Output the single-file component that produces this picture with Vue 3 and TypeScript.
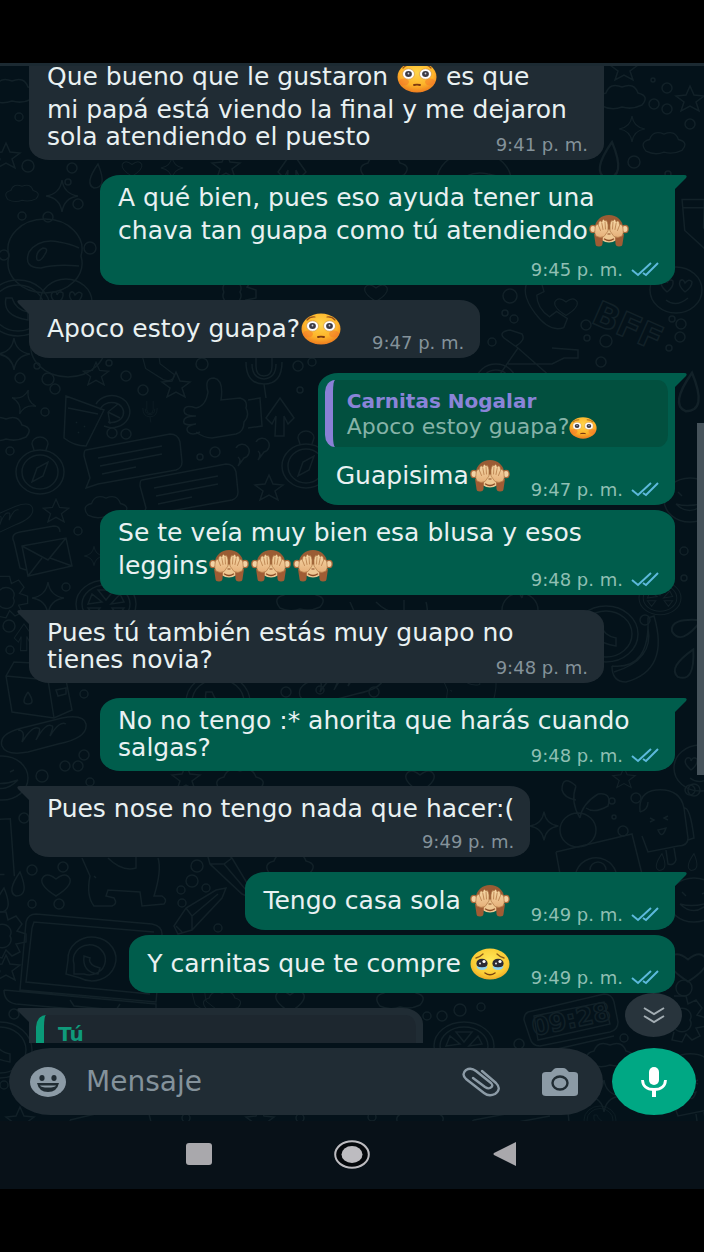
<script setup lang="ts">
type EmojiName = 'flushed' | 'monkey' | 'tears'
type Segment = string | { emoji: EmojiName }
type Mode = 'inline' | 'overlay' | 'stacked'

interface Message {
  id: number
  mine: boolean
  tail: boolean
  mode: Mode
  time: string
  lines: Segment[][]
  quote?: { author: string; body: Segment[] }
}

const flushed: Segment = { emoji: 'flushed' }
const monkey: Segment = { emoji: 'monkey' }
const tears: Segment = { emoji: 'tears' }

const emojiLabels: Record<EmojiName, string> = {
  flushed: 'cara sonrojada',
  monkey: 'mono que se tapa los ojos',
  tears: 'cara aguantando las lágrimas',
}

const messages: Message[] = [
  {
    id: 1, mine: false, tail: false, mode: 'overlay', time: '9:41 p. m.',
    lines: [
      ['Que bueno que le gustaron ', flushed, ' es que'],
      ['mi papá está viendo la final y me dejaron'],
      ['sola atendiendo el puesto'],
    ],
  },
  {
    id: 2, mine: true, tail: true, mode: 'stacked', time: '9:45 p. m.',
    lines: [
      ['A qué bien, pues eso ayuda tener una'],
      ['chava tan guapa como tú atendiendo', monkey],
    ],
  },
  { id: 3, mine: false, tail: true, mode: 'inline', time: '9:47 p. m.', lines: [['Apoco estoy guapa?', flushed]] },
  {
    id: 4, mine: true, tail: true, mode: 'inline', time: '9:47 p. m.',
    lines: [['Guapisima', monkey]],
    quote: { author: 'Carnitas Nogalar', body: ['Apoco estoy guapa?', flushed] },
  },
  {
    id: 5, mine: true, tail: false, mode: 'overlay', time: '9:48 p. m.',
    lines: [['Se te veía muy bien esa blusa y esos'], ['leggins', monkey, monkey, monkey]],
  },
  {
    id: 6, mine: false, tail: true, mode: 'overlay', time: '9:48 p. m.',
    lines: [['Pues tú también estás muy guapo no'], ['tienes novia?']],
  },
  {
    id: 7, mine: true, tail: true, mode: 'overlay', time: '9:48 p. m.',
    lines: [['No no tengo :* ahorita que harás cuando'], ['salgas?']],
  },
  { id: 8, mine: false, tail: true, mode: 'stacked', time: '9:49 p. m.', lines: [['Pues nose no tengo nada que hacer:(']] },
  { id: 9, mine: true, tail: true, mode: 'inline', time: '9:49 p. m.', lines: [['Tengo casa sola ', monkey]] },
  { id: 10, mine: true, tail: false, mode: 'inline', time: '9:49 p. m.', lines: [['Y carnitas que te compre ', tears]] },
]

const isTall = (line: Segment[]): boolean => line.some((s) => typeof s !== 'string')
const startsGroup = (i: number): boolean => i > 0 && messages[i].mine !== messages[i - 1].mine

/* Wallpaper doodles, each drawn around its own origin. */
const shapes = {
  star: 'M0-13 4-4 14-3 6 3 9 12 0 7-9 12-6 3-14-3-4-4Z',
  spark: 'M0-16Q2-2 16 0 2 2 0 16-2 2-16 0-2-2 0-16Z',
  cloud: 'M-20 8Q-28-2-16-5-12-16 0-11 12-16 16-5 28-2 20 7 10 12 0 9-10 13-20 8Z',
  heart: 'M0 12Q-16 2-14-5-10-13 0-5 10-13 14-5 16 2 0 12Z',
  planet: 'M-36 0A37 30 0 1 1 36 0 37 30 0 1 1-36 0M34 10Q10 8-4 12-22 12-16-4-6-18 14-14 26-12 34-8M-8 4Q-10-4-2-8 4-8 0-2-4 6-8 4',
  thumb: 'M-16 0Q-6-2-4-16-8-30 2-30 12-28 9-8L28-10Q36-8 34 0 38 8 32 14 32 24 24 26L0 30Q-8 30-16 24M-16 0Q-28-4-28 3-28 8-16 8-30 8-28 15-26 18-16 16-28 18-24 24-20 28-12 24M36-8 48-10 50 18 36 20',
  chat: 'M-46-10 38-26Q46-26 48-18L50 2Q50 8 44 10L-34 24-46 28-42 18-48-4Q-48-10-46-10M-34-2 30-14M-32 6 30-6M-30 14 4 7',
  compass: 'M-24 0A24 22 0 1 1 24 0 24 22 0 1 1-24 0M-18 0A18 17 0 1 1 18 0 18 17 0 1 1-18 0M8-10 3 4-8 10-3-4ZM-6-22-8-28A8 7 0 1 1 8-28L6-22',
  drink: 'M-22-22 16-8-2 28Q-14 28-24 20ZM-20-10 10-4M8-14A18 16 0 1 1 16 8M12-8A12 10 0 1 1 20 4M20-6 30-14M20-6 32 0M20-6 22 6M-12 4-11 5M-4 8-3 9M-10 14-9 15',
  mic: 'M-8-28V-6Q-8 4 0 4 8 4 8-6V-28M-18-10Q-18 12 0 12 18 12 18-10M-12-8Q-12 6 0 7 12 6 12-8M0 12 2 26',
  arrow: 'M-14 0 0-20 14 0 8 6 4-2 4 18-5 18-4-2-8 6Z',
  envelope: 'M-30-16Q-34-24-24-26L10-32Q16-32 16-26M-22-12 22-20 28 8-16 18ZM-22-12 4 2 22-20M-16 18-2 0M28 8 6 0M-30-16-24 10-18 12',
  milk: 'M-30-14-22-28 18-26 30-10 36 20 18 28-24 22ZM-30-14 12-10 18 28M12-10 18-26M-8 2Q-16 14-8 14 0 14-8 2M20 0 30-2 30 4 22 6Z',
  bread: 'M-40 6Q-44-6-20-12L20-22Q42-26 44-16 46-2 16 4L-14 12Q-36 16-40 6M-24-10Q-16-10-20 2-10-14-4-12 0-12-6 0 4-18 10-14 12-14 8-4 18-20 24-16',
  laptop: 'M-66-46Q-64-54-56-54L60-44Q70-42 70-34L64 34-72 22ZM-60-40-58-46 62-36M-60-40-66 14 58 26M-88 22 64 36V48L-76 36Q-88 34-88 22M-22 32-18 38 24 42 28 36M-26 6-24-8A24 22 0 1 1-12 10ZM-18-4A16 15 0 1 1-8 6L-18 6ZM-8-12Q-10 4 6 6L8 0 2-2Q-4-6-2-10Z',
  cat: 'M-40-18-32 0Q-36 20-28 30L-10 30Q-4 28-8 22L-16 20-14 14 18 16 20 30 42 28Q46 24 40 20L32 20Q40-6 36-18M-14-18Q0-4 14-8L14-20M-28 0-26 2',
  pencil: 'M-26 14-14-4 16-22 26-24 22-14-8 18-22 22ZM-14-4-8 4-8 18M-8 4 18-18M-24 14-18 20',
  popsicle: 'M-20-14Q-22-34-4-36 20-38 24-18L28 12Q28 20 18 20L-12 26-18 10M24-18Q30-20 34 12L28 14M6 24 8 38Q14 40 16 34L14 22M-10-8-6-6-10-4M8-10 4-8 8-6M-2 4Q2 14 6 2ZM-20-14Q-12-16-12-24',
  cherry: 'M-20 18A18 17 0 1 1 16 18 18 17 0 1 1-20 18M0 6Q-10-10-4-26M0 6Q2-8 18-18M-4-26Q-18-38-18-22-16-14-4-12M18-18Q32-20 28-6 14 2 6-4',
  phone: 'M-16-30Q-28-16-10 8 6 30 22 24L26 14 14 6 6 12Q-8 2-8-12L0-16-4-30Z',
  orange: 'M-30 0A30 24 0 1 1 30 0 30 24 0 1 1-30 0M-24 0A24 19 0 1 1 24 0 24 19 0 1 1-24 0M-18 0-4-2-14-10ZM-8-14 0-4 8-14ZM18-2 5 0 14-10ZM18 4 6 4 12 12ZM-18 4-6 4-12 12Z',
  watch: 'M-44-10 32-28Q40-28 42-20L46 0Q46 8 38 10L-32 24Q-40 24-42 16L-48-2Q-48-8-44-10M-38-6 32-20 38 2-34 18ZM-28 30 42 14',
  bike: 'M-42 16A20 18 0 1 1-2 16M-36 16A14 12 0 1 1-8 16M-22 14 0-18 34 12M0-18-14-28Q-20-34-8-36L4-32Q8-26-2-20M-10-2 34-2 46-8 60-8 60-16 34-18',
  smile: 'M-26 0A26 22 0 1 1 26 0 26 22 0 1 1-26 0M-12-8-8-4M8-6 12-8M-14 4Q0 18 16 2Q0 8-14 4',
  hearteyes: 'M-26 0A26 23 0 1 1 26 0 26 23 0 1 1-26 0M-9 2Q-18-6-13-10-9-11-9-7-7-12-3-9-2-3-9 2M9 2Q2-4 4-9 7-12 9-7 13-12 16-8 16-3 9 2M-10 10Q0 18 12 8',
  banana: 'M-28 18Q10 22 8-30L14-32Q30 22-14 34-28 34-28 18M8-20Q14 12-26 24',
  wheel: 'M-32 0A32 28 0 1 1 32 0 32 28 0 1 1-32 0M-26 0A26 23 0 1 1 26 0 26 23 0 1 1-26 0M-12-10Q-16 8 10 12L10 4Q-2 2-6-10Z',
  photo: 'M-40-10 36-28 50 28M-40-10-32 34M-20 24A20 20 0 0 1 20 10M-6 8A8 8 0 1 1 10 8M-26 40 40 28',
  quote: 'M-14-6A7 7 0 1 1-6 4L-12 12Q-8 6-12 3M6-12A7 7 0 1 1 14-2L8 6Q12 0 8-3',
  drop: 'M0-12Q-14 8-4 12 10 12 0-12Z',
  gear: 'M-8-24 4-24 6-16 14-20 20-12 15-5 24-2 24 6 14 8 18 16 10 20 4 14 0 22-10 20-8 12M-8 0A9 8 0 1 1 8 0 9 8 0 1 1-8 0',
  sock: 'M-16-22 6-26 10 2 28 16Q26 26 14 22L-8 8ZM-14-14 8-18',
} as const

interface Doodle { s: keyof typeof shapes; x: number; y: number; k?: number; r?: number }

const doodles: Doodle[] = [
  { s: 'cloud', x: 12, y: 92 }, { s: 'star', x: 6, y: 156 }, { s: 'cloud', x: 22, y: 194, k: 0.7 }, { s: 'spark', x: 62, y: 196 },
  { s: 'planet', x: 45, y: 256 }, { s: 'wheel', x: 18, y: 308 }, { s: 'hearteyes', x: 66, y: 302 }, { s: 'drop', x: 98, y: 176 },
  { s: 'heart', x: 132, y: 168, k: 0.7 }, { s: 'spark', x: 172, y: 168, k: 0.7 }, { s: 'star', x: 226, y: 166 }, { s: 'arrow', x: 292, y: 172 },
  { s: 'cloud', x: 384, y: 168 }, { s: 'planet', x: 474, y: 188 }, { s: 'star', x: 272, y: 76 },
  { s: 'star', x: 624, y: 68 }, { s: 'star', x: 690, y: 99 }, { s: 'cloud', x: 622, y: 98 }, { s: 'spark', x: 632, y: 129, k: 0.8 },
  { s: 'cloud', x: 664, y: 144, k: 0.9 }, { s: 'drop', x: 612, y: 160, k: 1.5 }, { s: 'sock', x: 694, y: 224, r: 10 },
  { s: 'hearteyes', x: 676, y: 290 }, { s: 'heart', x: 566, y: 306, k: 0.8 },
  { s: 'phone', x: 544, y: 306, k: 0.9 }, { s: 'bike', x: 518, y: 366 }, { s: 'heart', x: 376, y: 292, k: 0.8 }, { s: 'gear', x: 232, y: 292 },
  { s: 'planet', x: 68, y: 340 }, { s: 'spark', x: 14, y: 354 }, { s: 'star', x: 96, y: 374, k: 0.9 }, { s: 'star', x: 176, y: 385 },
  { s: 'sock', x: 152, y: 362, k: 0.8 }, { s: 'mic', x: 264, y: 372 }, { s: 'thumb', x: 212, y: 408 }, { s: 'drink', x: 88, y: 418 },
  { s: 'spark', x: 24, y: 402, r: 20, k: 0.8 }, { s: 'cloud', x: 6, y: 430 }, { s: 'mic', x: 150, y: 412, k: 0.4 }, { s: 'arrow', x: 280, y: 418 },
  { s: 'compass', x: 40, y: 472 }, { s: 'chat', x: 132, y: 460 }, { s: 'chat', x: 188, y: 490 }, { s: 'quote', x: 250, y: 454 },
  { s: 'compass', x: 306, y: 466 }, { s: 'star', x: 269, y: 488 }, { s: 'cloud', x: 106, y: 508, k: 0.9 }, { s: 'star', x: 56, y: 511, k: 0.9 },
  { s: 'bread', x: 4, y: 524, k: 0.7, r: -10 }, { s: 'envelope', x: 44, y: 558 }, { s: 'spark', x: 94, y: 556, k: 0.6 }, { s: 'gear', x: 6, y: 598, k: 0.9 },
  { s: 'spark', x: 48, y: 598 }, { s: 'orange', x: 106, y: 604 }, { s: 'cat', x: 390, y: 620 }, { s: 'cloud', x: 300, y: 600 },
  { s: 'arrow', x: 24, y: 638, k: 0.7 }, { s: 'milk', x: 36, y: 690 }, { s: 'bread', x: 42, y: 740 }, { s: 'smile', x: 2, y: 778 },
  { s: 'cherry', x: 522, y: 592 }, { s: 'orange', x: 660, y: 598, k: 0.7 }, { s: 'wheel', x: 606, y: 634 }, { s: 'banana', x: 640, y: 648 },
  { s: 'drop', x: 688, y: 628, r: 60, k: 1.3 }, { s: 'drop', x: 688, y: 664, r: 20, k: 1.3 }, { s: 'wheel', x: 218, y: 702 }, { s: 'bread', x: 340, y: 690 },
  { s: 'hearteyes', x: 700, y: 768 }, { s: 'cat', x: 470, y: 690, k: 0.7 }, { s: 'smile', x: 690, y: 500 }, { s: 'drop', x: 692, y: 392, k: 1.6 },
  { s: 'star', x: 186, y: 778 }, { s: 'cloud', x: 240, y: 782 }, { s: 'heart', x: 420, y: 780 }, { s: 'cherry', x: 580, y: 812 },
  { s: 'popsicle', x: 660, y: 826 }, { s: 'photo', x: 596, y: 862 }, { s: 'spark', x: 544, y: 826, k: 0.9 }, { s: 'star', x: 624, y: 778, k: 0.8 },
  { s: 'photo', x: -30, y: 840, r: 10 }, { s: 'drop', x: 20, y: 884 }, { s: 'drop', x: 4, y: 900 }, { s: 'heart', x: 56, y: 884 },
  { s: 'cat', x: 122, y: 876 }, { s: 'pencil', x: 200, y: 912 }, { s: 'pencil', x: 228, y: 872, r: 90 }, { s: 'cloud', x: 290, y: 866 },
  { s: 'laptop', x: 92, y: 968 }, { s: 'star', x: 6, y: 968 }, { s: 'gear', x: 2, y: 936 }, { s: 'drop', x: 662, y: 862, k: 0.7 },
  { s: 'drop', x: 694, y: 862, k: 0.7 }, { s: 'smile', x: 694, y: 900 }, { s: 'heart', x: 688, y: 966, k: 1.3 }, { s: 'cloud', x: 400, y: 998 },
  { s: 'sock', x: 200, y: 1000, k: 0.6 }, { s: 'heart', x: 290, y: 1000 }, { s: 'cloud', x: 222, y: 1002, k: 0.8 }, { s: 'orange', x: 464, y: 1046 },
  { s: 'watch', x: 572, y: 1022 }, { s: 'gear', x: 682, y: 1020 }, { s: 'wheel', x: 0, y: 1050 }, { s: 'cloud', x: 610, y: 1056 },
  { s: 'spark', x: 604, y: 1096 }, { s: 'wheel', x: 600, y: 1120, k: 0.5 }, { s: 'photo', x: 110, y: 1130 }, { s: 'popsicle', x: 690, y: 1090 },
  { s: 'star', x: 260, y: 1120 }, { s: 'cloud', x: 420, y: 1118 }, { s: 'star', x: 20, y: 1120 }, { s: 'chat', x: 520, y: 1130 },
]

const dots: number[][] = [
  [19, 117, 4], [28, 166, 6], [72, 168, 5], [68, 182, 3], [78, 204, 5], [48, 217, 5], [22, 216, 4], [4, 255, 5], [90, 248, 6],
  [667, 88, 5], [654, 104, 5], [667, 109, 5], [690, 124, 5], [634, 162, 6], [653, 80, 2], [668, 174, 3],
  [20, 378, 5], [48, 379, 6], [37, 366, 3], [55, 389, 5], [126, 376, 5], [109, 363, 3], [143, 390, 5], [45, 412, 4], [112, 433, 5], [126, 434, 5],
  [10, 451, 4], [200, 457, 3], [215, 452, 5], [202, 364, 6], [298, 366, 5], [312, 362, 4], [300, 390, 3],
  [586, 325, 5], [606, 341, 6], [587, 338, 3], [681, 324, 5], [672, 319, 3], [601, 362, 5], [680, 337, 5], [669, 348, 3], [505, 313, 3], [514, 319, 4], [492, 342, 4], [510, 296, 7],
  [78, 531, 4], [66, 587, 4], [9, 626, 6], [10, 650, 4], [84, 694, 4], [84, 755, 5], [65, 766, 5], [78, 766, 5], [42, 776, 6], [90, 782, 4],
  [684, 551, 4], [684, 578, 3], [645, 620, 5], [286, 692, 5], [320, 690, 4], [374, 692, 5], [690, 790, 5], [612, 801, 3], [614, 817, 2], [636, 798, 5], [623, 831, 5], [694, 790, 6],
  [24, 818, 5], [32, 870, 5], [63, 867, 5], [32, 904, 4], [59, 904, 5], [197, 866, 6], [192, 881, 6], [181, 890, 4], [206, 888, 4], [182, 903, 4], [218, 928, 4],
  [14, 1014, 5], [427, 1016, 4], [442, 1016, 5], [460, 1010, 6], [481, 1007, 4], [519, 1044, 5], [4, 1085, 4], [624, 1038, 4], [684, 988, 8],
  [186, 1118, 4], [300, 1118, 4], [372, 1117, 4], [640, 1100, 5],
]
</script>

<template>
  <div class="phone">
    <!-- Shared emoji artwork -->
    <svg class="defs" aria-hidden="true">
      <defs>
        <radialGradient id="g-face" cx="0.5" cy="0.35" r="0.7">
          <stop offset="0" stop-color="#ffd54a" />
          <stop offset="0.6" stop-color="#fdb42a" />
          <stop offset="1" stop-color="#ea701c" />
        </radialGradient>
        <radialGradient id="g-yellow" cx="0.5" cy="0.4" r="0.65">
          <stop offset="0" stop-color="#ffe95a" />
          <stop offset="0.7" stop-color="#fbcb34" />
          <stop offset="1" stop-color="#e99f22" />
        </radialGradient>
        <linearGradient id="g-hand" x1="0" y1="0" x2="0" y2="1">
          <stop offset="0" stop-color="#f6d8a6" />
          <stop offset="1" stop-color="#e6b07a" />
        </linearGradient>
      </defs>
      <symbol id="e-flushed" viewBox="0 0 40 32" preserveAspectRatio="none">
        <ellipse cx="20" cy="16" rx="19.500" ry="15.500" fill="url(#g-face)" />
        <ellipse cx="7" cy="21" rx="5" ry="3.500" fill="#f4742a" opacity=".5" />
        <ellipse cx="33" cy="21" rx="5" ry="3.500" fill="#f4742a" opacity=".5" />
        <path d="M6 7Q9 3.500 14 4M26 4Q31 3.500 34 7" fill="none" stroke="#9a5218" stroke-width="1.200" stroke-linecap="round" />
        <ellipse cx="11.500" cy="13" rx="6" ry="5.200" fill="#fff" stroke="#c98a3a" stroke-width=".6" />
        <ellipse cx="28.500" cy="13" rx="6" ry="5.200" fill="#fff" stroke="#c98a3a" stroke-width=".6" />
        <ellipse cx="11.500" cy="13" rx="3.400" ry="3" fill="#3b3a44" />
        <ellipse cx="28.500" cy="13" rx="3.400" ry="3" fill="#3b3a44" />
        <circle cx="11.500" cy="12.500" r=".9" fill="#c9cbd6" />
        <circle cx="28.500" cy="12.500" r=".9" fill="#c9cbd6" />
        <path d="M17 24Q20 23.300 23 24" fill="none" stroke="#7c3a10" stroke-width="1.800" stroke-linecap="round" />
      </symbol>
      <symbol id="e-monkey" viewBox="0 0 40 32" preserveAspectRatio="none">
        <ellipse cx="4" cy="14" rx="3.800" ry="4.200" fill="#a8683a" />
        <ellipse cx="36" cy="14" rx="3.800" ry="4.200" fill="#a8683a" />
        <ellipse cx="4" cy="14" rx="2.500" ry="3" fill="#f2d2a4" />
        <ellipse cx="36" cy="14" rx="2.500" ry="3" fill="#f2d2a4" />
        <ellipse cx="20" cy="12.500" rx="14" ry="12.500" fill="#9a5c34" />
        <ellipse cx="20" cy="21" rx="9.500" ry="6.500" fill="#eec792" />
        <path d="M15.500 24Q20 27 24.500 24" fill="none" stroke="#8a4a24" stroke-width="1.300" stroke-linecap="round" />
        <path d="M5 19H14L13.500 29Q13 31.500 10 31.500 6.500 31.500 6.500 29ZM35 19H26L26.500 29Q27 31.500 30 31.500 33.500 31.500 33.500 29Z" fill="#a05c34" />
        <path d="M19 10Q18 4 16 6 14 2.500 12.800 7 10 4 9.500 9.500 6 9 6 14 5 18 7 21 11 23.500 15 21.500L19 16Z" fill="url(#g-hand)" stroke="#b07846" stroke-width=".7" />
        <path d="M21 10Q22 4 24 6 26 2.500 27.200 7 30 4 30.500 9.500 34 9 34 14 35 18 33 21 29 23.500 25 21.500L21 16Z" fill="url(#g-hand)" stroke="#b07846" stroke-width=".7" />
        <path d="M16 7 16.500 14M12.800 8 14 14.500M9.500 10.500 11.500 15.500M24 7 23.500 14M27.200 8 26 14.500M30.500 10.500 28.500 15.500" stroke="#bb8350" stroke-width=".9" stroke-linecap="round" />
        <path d="M18.500 19H21.500" stroke="#8a4a24" stroke-width="1" />
      </symbol>
      <symbol id="e-tears" viewBox="0 0 40 32" preserveAspectRatio="none">
        <ellipse cx="20" cy="16" rx="19.500" ry="15.500" fill="url(#g-yellow)" />
        <path d="M6 10Q10 9 13 6M27 6Q30 9 34 10" fill="none" stroke="#8c5a16" stroke-width="1.300" stroke-linecap="round" />
        <ellipse cx="12" cy="15.500" rx="5.600" ry="4.800" fill="#2c2a35" />
        <ellipse cx="28" cy="15.500" rx="5.600" ry="4.800" fill="#2c2a35" />
        <circle cx="14" cy="13.500" r="1.600" fill="#fff" />
        <circle cx="30" cy="13.500" r="1.600" fill="#fff" />
        <circle cx="10" cy="15.500" r=".9" fill="#fff" />
        <circle cx="26" cy="15.500" r=".9" fill="#fff" />
        <path d="M6.500 18Q12 20.500 17.500 18 17 22 12 22 7 22 6.500 18ZM22.500 18Q28 20.500 33.500 18 33 22 28 22 23 22 22.500 18Z" fill="#8ed3ee" />
        <path d="M15 25Q20 28.500 25 25" fill="none" stroke="#7a4310" stroke-width="1.500" stroke-linecap="round" />
      </symbol>
    </svg>

    <main class="screen">
      <svg class="wallpaper" viewBox="0 63 704 1058" preserveAspectRatio="xMidYMid slice" aria-hidden="true">
        <path
          v-for="(d, i) in doodles" :key="i" :d="shapes[d.s]"
          :transform="`translate(${d.x} ${d.y}) rotate(${d.r ?? 0}) scale(${d.k ?? 1})`"
        />
        <circle v-for="([x, y, r], i) in dots" :key="'c' + i" :cx="x" :cy="y" :r="r" />
        <text x="590" y="322" font-size="34" transform="rotate(24 590 322)">BFF</text>
        <text x="534" y="1036" font-size="25" transform="rotate(-12 534 1036)">09:28</text>
      </svg>

      <div class="edge"></div>

      <section class="chat" aria-label="Conversación">
        <div
          v-for="(m, i) in messages" :key="m.id" class="row"
          :class="{ mine: m.mine, group: startsGroup(i) }"
        >
          <article class="bubble" :class="[m.mode, { tail: m.tail, quoted: m.quote }]">
            <svg v-if="m.tail" class="tip" viewBox="0 0 12 14" aria-hidden="true">
              <path d="M0 0H9Q13 0 11 3L0 14Z" />
            </svg>
            <blockquote v-if="m.quote" class="quote">
              <strong>{{ m.quote.author }}</strong>
              <span class="quote-body"><template v-for="(s, k) in m.quote.body" :key="k"><template v-if="typeof s === 'string'">{{ s }}</template><svg v-else class="emoji small" role="img" :aria-label="emojiLabels[s.emoji]"><use :href="'#e-' + s.emoji" /></svg></template></span>
            </blockquote>
            <div class="body">
              <p class="text">
                <span v-for="(line, n) in m.lines" :key="n" class="line" :class="{ tall: isTall(line) }"><template v-for="(s, k) in line" :key="k"><template v-if="typeof s === 'string'">{{ s }}</template><svg v-else class="emoji" role="img" :aria-label="emojiLabels[s.emoji]"><use :href="'#e-' + s.emoji" /></svg></template></span>
              </p>
              <div class="meta">
                <time>{{ m.time }}</time>
                <svg v-if="m.mine" class="ticks" viewBox="0 0 28 15" role="img" aria-label="Leído">
                  <path d="M1 8 7 13 20 1M12 11 15 13 27 1" />
                </svg>
              </div>
            </div>
          </article>
        </div>

        <div class="row group">
          <article class="bubble reply tail">
            <svg class="tip" viewBox="0 0 12 14" aria-hidden="true"><path d="M0 0H9Q13 0 11 3L0 14Z" /></svg>
            <blockquote class="quote own"><strong>Tú</strong></blockquote>
          </article>
        </div>
      </section>

      <div class="scrollbar"></div>

      <footer class="composer">
        <div class="field">
          <button class="icon" type="button" aria-label="Emojis">
            <svg width="36" height="30" viewBox="0 0 36 30">
              <ellipse cx="18" cy="15" rx="18" ry="15" fill="#8c9ba6" />
              <ellipse cx="12" cy="11" rx="2.600" ry="3" fill="#202c33" />
              <ellipse cx="24" cy="11" rx="2.600" ry="3" fill="#202c33" />
              <path d="M7 16H29Q27 25 18 25 9 25 7 16Z" fill="#202c33" />
              <path d="M10 18.500H26Q25 20.500 18 20.500 11 20.500 10 18.500Z" fill="#8c9ba6" />
            </svg>
          </button>
          <input class="entry" type="text" placeholder="Mensaje" aria-label="Mensaje" />
          <button class="icon" type="button" aria-label="Adjuntar">
            <svg width="38" height="30" viewBox="0 0 38 30">
              <path d="M20 4 34 16Q40 22 33 27 27 30 22 26L4 12Q-1 7 4 3 9 0 14 4L29 16Q32 19 28 21 26 22 23 20L11 11" fill="none" stroke="#8c9ba6" stroke-width="2.400" stroke-linecap="round" stroke-linejoin="round" />
            </svg>
          </button>
          <button class="icon" type="button" aria-label="Cámara">
            <svg width="36" height="28" viewBox="0 0 36 28">
              <path d="M4 4H9L12 1Q13 0 15 0H21Q23 0 24 1L27 4H32Q36 4 36 7V25Q36 28 32 28H4Q0 28 0 25V7Q0 4 4 4Z" fill="#8c9ba6" />
              <ellipse cx="18" cy="15" rx="7.500" ry="6.500" fill="none" stroke="#202c33" stroke-width="2.400" />
            </svg>
          </button>
        </div>
        <div class="voice">
          <button class="down" type="button" aria-label="Ir al final">
            <svg width="22" height="18" viewBox="0 0 22 18">
              <path d="M1 2 11 8 21 2M1 10 11 16 21 10" fill="none" stroke="#a3adb3" stroke-width="2" />
            </svg>
          </button>
          <button class="record" type="button" aria-label="Mensaje de voz">
            <svg width="26" height="30" viewBox="0 0 26 30">
              <rect x="8" y="0" width="10" height="18" rx="5" fill="#fff" />
              <path d="M1.500 13Q2 22.500 13 22.500 24 22.500 24.500 13" fill="none" stroke="#fff" stroke-width="2.800" />
              <path d="M13 22V30" stroke="#fff" stroke-width="4" />
            </svg>
          </button>
        </div>
      </footer>
    </main>

    <nav class="system" aria-label="Navegación">
      <button type="button" aria-label="Recientes">
        <svg width="26" height="22" viewBox="0 0 26 22"><rect width="26" height="22" rx="3" fill="#a9a8ac" /></svg>
      </button>
      <button type="button" aria-label="Inicio">
        <svg width="36" height="29" viewBox="0 0 36 29">
          <ellipse cx="18" cy="14.500" rx="16.800" ry="13.300" fill="#05080b" stroke="#bdbcc0" stroke-width="2" />
          <ellipse cx="18" cy="14.500" rx="10.500" ry="8.500" fill="#bdbcc0" />
        </svg>
      </button>
      <button type="button" aria-label="Atrás">
        <svg width="24" height="24" viewBox="0 0 24 24"><path d="M23 0V24L1 13Q0 12 1 11Z" fill="#a9a8ac" /></svg>
      </button>
    </nav>
  </div>
</template>

<style>
html,
body {
  margin: 0;
  background: #000;
}
</style>

<style scoped>
.phone {
  box-sizing: border-box;
  height: 100vh;
  padding: 63px 0;
  display: flex;
  flex-direction: column;
  background: #000;
  color: #e9f1f2;
  font-family: "DejaVu Sans", Verdana, sans-serif;
  overflow: hidden;
}

.defs {
  position: absolute;
  width: 0;
  height: 0;
}

button {
  display: flex;
  align-items: center;
  justify-content: center;
  padding: 0;
  border: 0;
  background: none;
}

button svg {
  display: block;
}

.screen {
  position: relative;
  flex: 1;
  min-height: 0;
  display: flex;
  flex-direction: column;
  background: #04121a;
}

.wallpaper {
  position: absolute;
  inset: 0;
  width: 100%;
  height: 100%;
  fill: none;
  stroke: #122128;
  stroke-width: 1.5px;
  font-weight: 700;
}

.edge {
  position: relative;
  height: 3px;
  background: #1c2a32;
}

.chat {
  position: relative;
  flex: 1;
  min-height: 0;
  overflow: hidden;
}

.row {
  display: flex;
  padding: 0 29px;
  margin-top: 5px;
}

.row:first-child {
  margin-top: -18px;
}

.row.mine {
  justify-content: flex-end;
}

.row.group {
  margin-top: 15px;
}

.bubble {
  position: relative;
  box-sizing: border-box;
  max-width: 89%;
  padding: 9px 16px 10px 18px;
  border-radius: 20px / 16px;
  background: #202c34;
}

.mine .bubble {
  background: #005d4c;
}

.bubble.overlay,
.mine .bubble.stacked {
  width: 89%;
}

.bubble.tail {
  border-top-left-radius: 0;
}

.mine .bubble.tail {
  border-radius: 20px 0 20px 20px / 16px 0 16px 16px;
}

.tip {
  position: absolute;
  top: 0;
  left: -12px;
  width: 12px;
  height: 14px;
  fill: #202c34;
  transform: scaleX(-1);
}

.mine .tip {
  left: auto;
  right: -12px;
  fill: #005d4c;
  transform: none;
}

.body {
  display: flex;
  align-items: flex-end;
}

.overlay .body {
  display: grid;
}

.overlay .text,
.overlay .meta {
  grid-area: 1 / 1;
}

.stacked .body {
  flex-direction: column;
  align-items: stretch;
}

.text {
  margin: 0;
  font-size: 25px;
  line-height: 27px;
}

.line {
  display: block;
  white-space: nowrap;
}

.line.tall {
  height: 39px;
  line-height: 39px;
}

.emoji {
  width: 40px;
  height: 32px;
  margin: 0 1px;
  vertical-align: -8px;
}

.emoji.small {
  width: 28px;
  height: 22px;
  margin: 0;
  vertical-align: -5px;
}

.meta {
  display: flex;
  align-items: center;
  justify-content: flex-end;
  align-self: flex-end;
  gap: 8px;
  height: 25px;
  margin-bottom: -7px;
  font-size: 18px;
  line-height: 25px;
  white-space: nowrap;
  color: #84929a;
}

.stacked .meta {
  align-self: stretch;
  margin: 7px 0 -7px;
}

.inline .meta {
  margin-left: 30px;
}

.mine .meta {
  color: #8fbfb3;
}

.mine.row .inline .meta {
  margin-left: 20px;
}

.ticks {
  width: 28px;
  height: 15px;
  fill: none;
  stroke: #5cb9dc;
  stroke-width: 2px;
}

.bubble.quoted {
  padding-top: 7px;
}

.quote {
  margin: 0 -9px 9px -11px;
  padding: 8px 14px 7px;
  border-left: 8px solid #8a80d6;
  border-radius: 10px / 12px;
  background: #02503f;
  color: #86b3a8;
  font-size: 22px;
  line-height: 26px;
}

.quote strong {
  display: block;
  font-size: 20px;
  font-weight: 700;
  color: #8a84d8;
}

.quote-body {
  display: block;
  white-space: nowrap;
}

.bubble.reply {
  width: 61%;
  padding: 7px 7px 8px;
}

.quote.own {
  margin: 0;
  min-height: 70px;
  padding-top: 6px;
  border-left-color: #0a9a78;
  background: #1d272f;
}

.quote.own strong {
  color: #0f9a7b;
}

.scrollbar {
  position: absolute;
  top: 34%;
  right: 0;
  width: 7px;
  height: 352px;
  background: #46535b;
}

.composer {
  position: relative;
  display: flex;
  gap: 9px;
  padding: 5px 8px 6px 9px;
}

.field {
  flex: 1;
  min-width: 0;
  display: flex;
  align-items: center;
  box-sizing: border-box;
  height: 67px;
  padding: 0 25px 0 21px;
  border-radius: 42px / 34px;
  background: #202c34;
}

.field .icon:nth-of-type(2) {
  margin-right: 42px;
}

.entry {
  flex: 1;
  min-width: 0;
  margin-left: 20px;
  padding: 0;
  border: 0;
  outline: 0;
  background: none;
  color: #e9f1f2;
  font-family: inherit;
  font-size: 28px;
}

.entry::placeholder {
  color: #84929b;
  opacity: 1;
}

.voice {
  position: relative;
  width: 84px;
}

.record {
  width: 84px;
  height: 67px;
  border-radius: 50%;
  background: #00a884;
}

.down {
  position: absolute;
  bottom: 78px;
  left: 13px;
  width: 57px;
  height: 44px;
  border-radius: 50%;
  background: #28343c;
}

.system {
  display: flex;
  align-items: center;
  justify-content: center;
  gap: 117px;
  box-sizing: border-box;
  height: 68px;
  padding-bottom: 2px;
  background: #081118;
}

.system button {
  width: 36px;
  height: 36px;
}
</style>
